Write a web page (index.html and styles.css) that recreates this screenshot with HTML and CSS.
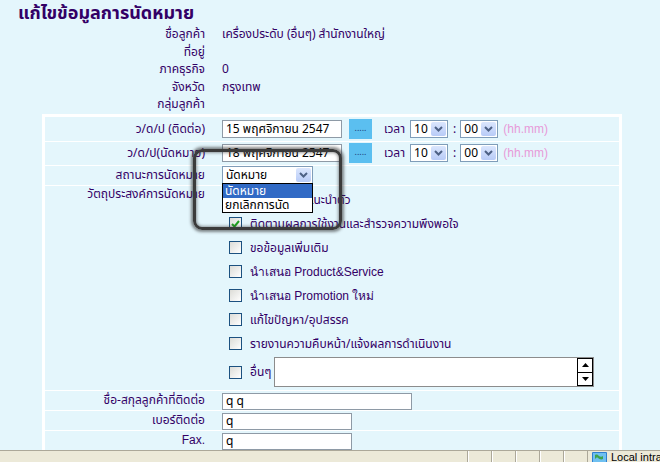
FILE: index.html
```html
<!DOCTYPE html>
<html lang="th">
<head>
<meta charset="utf-8">
<title>แก้ไขข้อมูลการนัดหมาย</title>
<link rel="stylesheet" href="styles.css">
</head>
<body>
<div class="content">
  <h1 class="title">แก้ไขข้อมูลการนัดหมาย</h1>
  <div class="info">
    <div class="ilabel">ชื่อลูกค้า</div><div class="ival">เครื่องประดับ (อื่นๆ) สำนักงานใหญ่</div>
    <div class="ilabel">ที่อยู่</div><div class="ival"></div>
    <div class="ilabel">ภาคธุรกิจ</div><div class="ival">0</div>
    <div class="ilabel">จังหวัด</div><div class="ival">กรุงเทพ</div>
    <div class="ilabel">กลุ่มลูกค้า</div><div class="ival"></div>
  </div>

  <div class="frame">
    <div class="row r-date">
      <div class="lbl">ว/ด/ป (ติดต่อ)</div>
      <div class="val">
        <div class="input w-date">15 พฤศจิกายน 2547</div>
        <div class="dots">.....</div>
        <span class="tlabel">เวลา</span>
        <div class="sel s-time"><span class="stext">10</span><span class="arr"><svg width="9" height="6" viewBox="0 0 9 6"><path d="M1 1l3.5 3.5L8 1" fill="none" stroke="#4d6185" stroke-width="2"/></svg></span></div>
        <span class="colon">:</span>
        <div class="sel s-time"><span class="stext">00</span><span class="arr"><svg width="9" height="6" viewBox="0 0 9 6"><path d="M1 1l3.5 3.5L8 1" fill="none" stroke="#4d6185" stroke-width="2"/></svg></span></div>
        <span class="hint">(hh.mm)</span>
      </div>
    </div>
    <div class="row r-date2">
      <div class="lbl">ว/ด/ป(นัดหมาย)</div>
      <div class="val">
        <div class="input w-date">18 พฤศจิกายน 2547</div>
        <div class="dots">.....</div>
        <span class="tlabel">เวลา</span>
        <div class="sel s-time"><span class="stext">10</span><span class="arr"><svg width="9" height="6" viewBox="0 0 9 6"><path d="M1 1l3.5 3.5L8 1" fill="none" stroke="#4d6185" stroke-width="2"/></svg></span></div>
        <span class="colon">:</span>
        <div class="sel s-time"><span class="stext">00</span><span class="arr"><svg width="9" height="6" viewBox="0 0 9 6"><path d="M1 1l3.5 3.5L8 1" fill="none" stroke="#4d6185" stroke-width="2"/></svg></span></div>
        <span class="hint">(hh.mm)</span>
      </div>
    </div>
    <div class="row r-status">
      <div class="lbl">สถานะการนัดหมาย</div>
      <div class="val">
        <div class="sel s-status"><span class="stext">นัดหมาย</span><span class="arr"><svg width="9" height="6" viewBox="0 0 9 6"><path d="M1 1l3.5 3.5L8 1" fill="none" stroke="#4d6185" stroke-width="2"/></svg></span></div>
      </div>
    </div>
    <div class="row r-purpose">
      <div class="lbl lbl-top">วัตถุประสงค์การนัดหมาย</div>
      <div class="val checks">
        <label class="chk"><span class="box"></span>เข้าพบลูกค้าแนะนำตัว</label>
        <label class="chk"><span class="box on"><svg width="9" height="8" viewBox="0 0 9 8"><path d="M1 4l2.5 2.5L8 1" fill="none" stroke="#21a121" stroke-width="2"/></svg></span>ติดตามผลการใช้งานและสำรวจความพึงพอใจ</label>
        <label class="chk"><span class="box"></span>ขอข้อมูลเพิ่มเติม</label>
        <label class="chk"><span class="box"></span><span class="lat">นำเสนอ Product&amp;Service</span></label>
        <label class="chk"><span class="box"></span><span class="lat">นำเสนอ Promotion ใหม่</span></label>
        <label class="chk"><span class="box"></span>แก้ไขปัญหา/อุปสรรค</label>
        <label class="chk"><span class="box"></span>รายงานความคืบหน้า/แจ้งผลการดำเนินงาน</label>
        <div class="chk other"><span class="box"></span>อื่นๆ
          <div class="tarea"><div class="tscroll"><span class="tbtn"><svg width="7" height="4" viewBox="0 0 7 4"><path d="M0 4L3.5 0L7 4z" fill="#000"/></svg></span><span class="tbtn"><svg width="7" height="4" viewBox="0 0 7 4"><path d="M0 0L3.5 4L7 0z" fill="#000"/></svg></span></div></div>
        </div>
      </div>
    </div>
    <div class="row r-small">
      <div class="lbl">ชื่อ-สกุลลูกค้าที่ติดต่อ</div>
      <div class="val"><div class="input w-name">q q</div></div>
    </div>
    <div class="row r-small">
      <div class="lbl">เบอร์ติดต่อ</div>
      <div class="val"><div class="input w-tel">q</div></div>
    </div>
    <div class="row r-small">
      <div class="lbl lat">Fax.</div>
      <div class="val"><div class="input w-tel">q</div></div>
    </div>
  </div>

  <div class="droplist">
    <div class="opt active">นัดหมาย</div>
    <div class="opt">ยกเลิกการนัด</div>
  </div>
  <div class="marker"></div>
</div>

<div class="statusbar">
  <div class="sb-main"></div>
  <div class="sb-cell"></div>
  <div class="sb-cell"></div>
  <div class="sb-cell"></div>
  <div class="sb-cell"></div>
  <div class="sb-cell"></div>
  <div class="sb-zone">
    <svg width="15" height="12" viewBox="0 0 15 12"><rect x="0" y="1" width="15" height="11" rx="1" fill="#2f7fd1"/><rect x="1" y="2" width="13" height="9" fill="#6fc0f0"/><path d="M3 4c2-1 3 0 4 1s3 1 4 0v3c-2 1-4 0-5-1s-2 0-3 1z" fill="#3fa34d"/></svg>
    <span>Local intranet</span>
  </div>
</div>
</body>
</html>
```

FILE: styles.css
```css
html, body {
  margin: 0;
  padding: 0;
}

body {
  width: 660px;
  height: 462px;
  display: flex;
  flex-direction: column;
  overflow: hidden;
  background: #e4f6fc;
  font-family: Tahoma, "Noto Sans Thai", "Noto Sans", "Liberation Sans", sans-serif;
  font-size: 12px;
  color: #330066;
}

.content {
  flex: 1;
  position: relative;
  overflow: hidden;
}

.title {
  margin: 0;
  height: 26px;
  line-height: 28px;
  padding-left: 18px;
  font-size: 18px;
  font-weight: bold;
  color: #330066;
}

.info {
  display: grid;
  grid-template-columns: 205px 1fr;
  column-gap: 17px;
  grid-auto-rows: 17.5px;
  line-height: 17.5px;
}

.ilabel {
  text-align: right;
}

.frame {
  margin-left: 42px;
  width: 574px;
  border: 3px solid #ffffff;
  border-bottom: 0;
  background: #ffffff;
  display: flex;
  flex-direction: column;
  gap: 1px;
}

.row {
  display: grid;
  grid-template-columns: 174px 1fr;
  background: #e4f6fc;
}

.lbl {
  text-align: right;
  padding-right: 14px;
  display: flex;
  align-items: center;
  justify-content: flex-end;
}

.lbl-top {
  align-items: flex-start;
  line-height: 16px;
}

.val {
  display: flex;
  align-items: center;
  padding-left: 3px;
}

.r-date { height: 24px; }
.r-date2 { height: 23px; }
.r-status { height: 19px; }
.r-purpose { height: 204px; }
.r-small { height: 19px; }
.r-small .val { align-items: flex-end; }

.input {
  box-sizing: border-box;
  height: 18px;
  border: 1px solid #8e9aa6;
  background: #ffffff;
  color: #000;
  line-height: 16px;
  padding-left: 3px;
  white-space: nowrap;
  overflow: hidden;
}

.r-small .input { height: 17px; line-height: 15px; }

.w-date { width: 120px; }
.w-name { width: 190px; }
.w-tel { width: 130px; }

.dots {
  width: 23px;
  height: 20px;
  margin-left: 7px;
  background: #5bbff0;
  color: #1d3e7a;
  font-size: 9px;
  line-height: 18px;
  text-align: center;
}

.tlabel {
  margin-left: 12px;
  margin-right: 5px;
}

.sel {
  box-sizing: border-box;
  height: 18px;
  border: 1px solid #7f9db9;
  background: #fff;
  display: flex;
  align-items: stretch;
  color: #000;
}

.s-time { width: 38px; }
.s-status { width: 91px; }

.stext {
  flex: 1;
  padding-left: 3px;
  line-height: 16px;
  white-space: nowrap;
  overflow: hidden;
}

.arr {
  width: 15px;
  margin: 1px;
  background: linear-gradient(#dbe6fd, #b8cbf7);
  border-radius: 2px;
  display: flex;
  align-items: center;
  justify-content: center;
}

.colon {
  margin: 0 4px 0 5px;
  color: #330066;
}

.hint {
  margin-left: 5px;
  color: #e79ad9;
  font-family: "Liberation Sans", Arial, sans-serif;
}

.lat {
  font-family: "Liberation Sans", Arial, sans-serif;
}

.checks {
  flex-direction: column;
  align-items: flex-start;
  padding-left: 10px;
  padding-top: 2px;
}

.chk {
  height: 24px;
  display: flex;
  align-items: center;
  white-space: nowrap;
}

.box {
  box-sizing: border-box;
  width: 13px;
  height: 13px;
  margin-right: 8px;
  border: 1px solid #1c5180;
  background: linear-gradient(135deg, #dcdcd7, #ffffff);
  display: flex;
  align-items: center;
  justify-content: center;
  flex: none;
}

.other {
  height: 33px;
}

.tarea {
  box-sizing: border-box;
  width: 320px;
  height: 30px;
  margin-left: 3px;
  border: 1px solid #8c8c8c;
  background: #fff;
  display: flex;
  justify-content: flex-end;
}

.tscroll {
  width: 16px;
  display: flex;
  flex-direction: column;
}

.tbtn {
  flex: 1;
  border: 1px solid #000;
  background: #fff;
  display: flex;
  align-items: center;
  justify-content: center;
}

.tbtn + .tbtn {
  border-top: 0;
}

.droplist {
  position: absolute;
  left: 222px;
  top: 183px;
  width: 91px;
  box-sizing: border-box;
  border: 1px solid #000;
  background: #fff;
  color: #000;
}

.opt {
  height: 14px;
  line-height: 14px;
  padding-left: 2px;
}

.opt.active {
  background: #316ac5;
  color: #fff;
}

.marker {
  position: absolute;
  left: 193px;
  top: 149px;
  width: 149px;
  height: 81px;
  box-sizing: border-box;
  border: 3px solid #3b3b3b;
  border-radius: 9px;
  box-shadow: 0 0 3px 2px rgba(40, 40, 40, 0.55), inset 0 0 3px 1px rgba(40, 40, 40, 0.45);
}

.statusbar {
  height: 11px;
  flex: none;
  background: #ece9d8;
  border-top: 1px solid #aca899;
  display: flex;
  font-family: Tahoma, "Liberation Sans", sans-serif;
  font-size: 11px;
  color: #000;
}

.sb-main {
  flex: none;
  width: 467px;
}

.sb-cell {
  flex: none;
  width: 23px;
  border-left: 1px solid #aca899;
  box-shadow: inset 1px 0 #fff;
}

.sb-zone {
  flex: 1;
  min-width: 0;
  border-left: 1px solid #aca899;
  padding-left: 4px;
  display: flex;
  align-items: flex-start;
  gap: 4px;
  white-space: nowrap;
  overflow: hidden;
  line-height: 13px;
}

.sb-zone svg {
  flex: none;
}
```
